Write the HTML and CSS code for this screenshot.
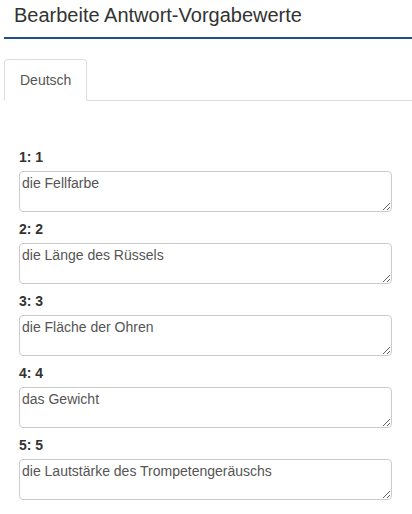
FILE: index.html
```html
<!DOCTYPE html>
<html lang="de">
<head>
<meta charset="utf-8">
<title>Bearbeite Antwort-Vorgabewerte</title>
<link rel="stylesheet" href="styles.css">
</head>
<body>
<div class="page">
  <div class="header">
    <h1 class="title">Bearbeite Antwort-Vorgabewerte</h1>
  </div>
  <ul class="tabs">
    <li class="tab active">Deutsch</li>
  </ul>
  <form class="form">
    <div class="field">
      <label class="label">1: 1</label>
      <textarea class="input">die Fellfarbe</textarea>
    </div>
    <div class="field">
      <label class="label">2: 2</label>
      <textarea class="input">die Länge des Rüssels</textarea>
    </div>
    <div class="field">
      <label class="label">3: 3</label>
      <textarea class="input">die Fläche der Ohren</textarea>
    </div>
    <div class="field">
      <label class="label">4: 4</label>
      <textarea class="input">das Gewicht</textarea>
    </div>
    <div class="field">
      <label class="label">5: 5</label>
      <textarea class="input">die Lautstärke des Trompetengeräuschs</textarea>
    </div>
  </form>
</div>
</body>
</html>
```
FILE: styles.css
```css
* {
  box-sizing: border-box;
}

html, body {
  margin: 0;
  padding: 0;
  background: #fff;
}

body {
  font-family: "Liberation Sans", Arial, sans-serif;
  font-size: 14px;
  line-height: 20px;
  color: #333;
}

.page {
  margin-left: 4px;
}

.header {
  padding: 4px 0 11px 10px;
  border-bottom: 2px solid #1f5184;
}

.title {
  margin: 0;
  font-size: 20px;
  line-height: 22px;
  font-weight: normal;
  color: #333;
}

.tabs {
  list-style: none;
  margin: 20px 0 0 0;
  padding: 0;
  display: flex;
  border-bottom: 1px solid #ddd;
}

.tab {
  padding: 10px 15px;
  line-height: 20px;
  color: #555;
  border: 1px solid #ddd;
  border-bottom-color: #fff;
  border-radius: 4px 4px 0 0;
  margin-bottom: -1px;
  background: #fff;
}

.form {
  margin: 46px 0 0 15px;
  width: 373px;
  display: flex;
  flex-direction: column;
}

.field {
  display: flex;
  flex-direction: column;
  margin-bottom: 7px;
}

.label {
  font-weight: bold;
  line-height: 20px;
  margin-bottom: 4px;
}

.input {
  display: block;
  width: 100%;
  height: 41px;
  padding: 2px;
  margin: 0;
  border: 1px solid #ccc;
  border-radius: 4px;
  font-family: "Liberation Sans", Arial, sans-serif;
  font-size: 14px;
  line-height: 18px;
  color: #555;
  resize: vertical;
  background: #fff;
}
```
